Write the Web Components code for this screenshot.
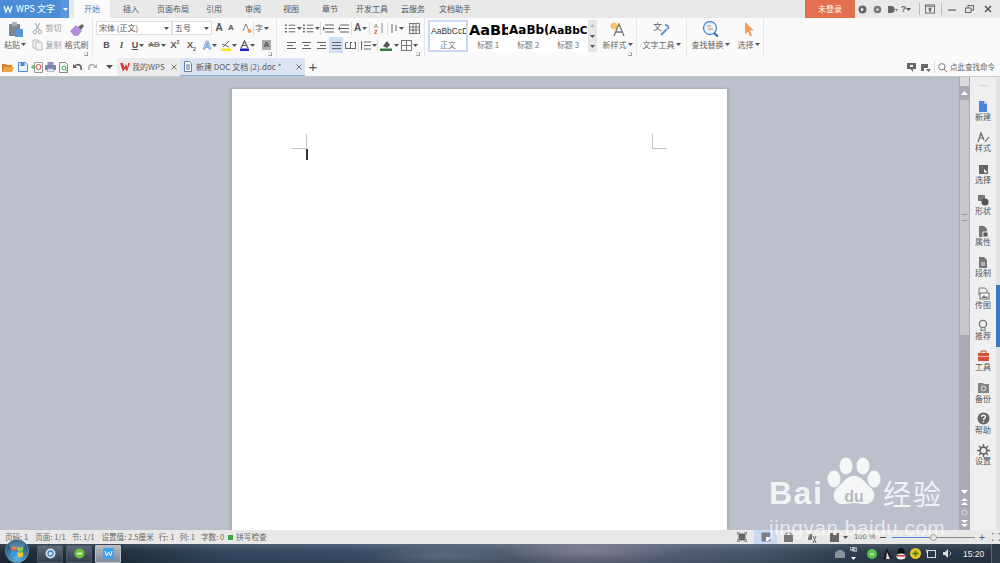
<!DOCTYPE html>
<html>
<head>
<meta charset="utf-8">
<style>
  html, body { margin: 0; padding: 0; width: 1000px; height: 563px; overflow: hidden; }
  body { font-family: "Noto Sans CJK SC", "Liberation Sans", sans-serif; }
  wps-side-item svg { display: block; }
</style>
</head>
<body>
<wps-app>
  <wps-titlebar></wps-titlebar>
  <wps-ribbon></wps-ribbon>
  <wps-quickbar></wps-quickbar>
  <wps-workspace>
    <wps-document></wps-document>
    <wps-scrollbar></wps-scrollbar>
    <wps-sidebar>
      <wps-side-item label="新建"><svg width="12" height="13" viewBox="0 0 12 13"><path d="M2 1h5l3 3v8H2z" fill="#4a86d8"/><path d="M7 1l3 3H7z" fill="#a9c8ef"/></svg></wps-side-item>
      <wps-side-item label="样式"><svg width="13" height="13" viewBox="0 0 13 13"><path d="M1 11L4 2l3 7M3 7h3M8 11l4-5" fill="none" stroke="#666" stroke-width="1.2"/></svg></wps-side-item>
      <wps-side-item label="选择"><svg width="12" height="12" viewBox="0 0 12 12"><rect x="2" y="2" width="9" height="9" fill="#666"/><path d="M7 6l3 3-1 1-2-1z" fill="#fff"/></svg></wps-side-item>
      <wps-side-item label="形状"><svg width="13" height="12" viewBox="0 0 13 12"><rect x="1" y="1" width="7" height="6" fill="#777"/><circle cx="8" cy="8" r="3.6" fill="#555"/></svg></wps-side-item>
      <wps-side-item label="属性"><svg width="12" height="13" viewBox="0 0 12 13"><path d="M2 1h5l3 3v8H2z" fill="#777"/><rect x="6" y="7" width="5" height="5" fill="#555" stroke="#eee"/></svg></wps-side-item>
      <wps-side-item label="段制"><svg width="12" height="13" viewBox="0 0 12 13"><path d="M2 1h5l3 3v8H2z" fill="#777"/><path d="M4 7h4M4 9h4" stroke="#eee"/></svg></wps-side-item>
      <wps-side-item label="传图"><svg width="13" height="13" viewBox="0 0 13 13"><path d="M2 8V1h6l2 2v2" fill="none" stroke="#777"/><rect x="3" y="6" width="9" height="6" fill="#fff" stroke="#666"/><path d="M4 11l3-3 2 2 1-1 1 2z" fill="#777"/></svg></wps-side-item>
      <wps-side-item label="推荐"><svg width="12" height="13" viewBox="0 0 12 13"><circle cx="6" cy="5" r="3.6" fill="none" stroke="#777" stroke-width="1.4"/><path d="M4 8.500V12l2-1 2 1V8.500" fill="none" stroke="#777"/></svg></wps-side-item>
      <wps-side-item label="工具"><svg width="13" height="12" viewBox="0 0 13 12"><path d="M4 3V1h5v2" fill="none" stroke="#c9492f"/><rect x="1" y="3" width="11" height="8" fill="#d0533a"/><rect x="1" y="6" width="11" height="1" fill="#f2b6a6"/></svg></wps-side-item>
      <wps-side-item label="备份"><svg width="13" height="12" viewBox="0 0 13 12"><path d="M1 1h5l1 1h5v9H1z" fill="#858585"/><circle cx="6.500" cy="6.500" r="2.200" fill="none" stroke="#eee"/></svg></wps-side-item>
      <wps-side-item label="帮助"><svg width="13" height="13" viewBox="0 0 13 13"><circle cx="6.500" cy="6.500" r="6" fill="#666"/><path d="M4.600 5c0-2.400 3.900-2.400 3.900 0 0 1.400-2 1.400-2 3" fill="none" stroke="#fff" stroke-width="1.300"/><rect x="5.800" y="9" width="1.400" height="1.400" fill="#fff"/></svg></wps-side-item>
      <wps-side-item label="设置"><svg width="13" height="13" viewBox="0 0 13 13"><circle cx="6.500" cy="6.500" r="3.400" fill="none" stroke="#666" stroke-width="1.600"/><path d="M6.500 0v3M6.500 10v3M0 6.500h3M10 6.500h3M2 2l2 2M9 9l2 2M11 2L9 4M4 9l-2 2" stroke="#666" stroke-width="1.400"/></svg></wps-side-item>
    </wps-sidebar>
  </wps-workspace>
  <wps-statusbar></wps-statusbar>
  <wps-taskbar></wps-taskbar>
  <wps-watermark></wps-watermark>
</wps-app>
<script>
const FONT = '"Noto Sans CJK SC", "Liberation Sans", sans-serif';
const caret = '<svg class="car" width="5" height="3" viewBox="0 0 5 3"><path d="M0 0h5L2.500 3z" fill="#555"/></svg>';

function svg(w, h, body) {
    return `<svg width="${w}" height="${h}" viewBox="0 0 ${w} ${h}">${body}</svg>`;
}
function cell(w, inner, cls) {
    return `<span class="cell ${cls || ''}" style="width:${w}px">${inner}</span>`;
}
function lines(xs, ys, c) {
    return ys.map((y, i) => `<path d="M${xs[i][0]} ${y}H${xs[i][1]}" stroke="${c || '#666'}"/>`).join('');
}

class WpsApp extends HTMLElement {
    constructor() {
        super();
        this.attachShadow({mode: 'open'});
    }
    connectedCallback() {
        this.shadowRoot.innerHTML = `
            <style>
                :host { display: flex; flex-direction: column; position: relative; width: 1000px; height: 563px; overflow: hidden; font-family: ${FONT}; }
            </style>
            <slot></slot>`;
    }
}

class WpsTitlebar extends HTMLElement {
    constructor() {
        super();
        this.attachShadow({mode: 'open'});
    }
    connectedCallback() {
        const tabs = [['插入', 13], ['页面布局', 18], ['引用', 17], ['审阅', 23], ['视图', 22], ['章节', 23], ['开发工具', 18], ['云服务', 13], ['文档助手', 14]];
        this.shadowRoot.innerHTML = `
            <style>
                :host { display: flex; height: 18px; background: #e9e9e9; color: #555; font-size: 8px; line-height: 18px; }
                .brand { width: 69px; display: flex; align-items: center; background: #4a8cd6; color: #fff; font-size: 9px; box-sizing: border-box; padding-left: 3px; }
                .brand b { font-weight: 400; margin-left: 3px; white-space: nowrap; }
                .brand i { margin-left: auto; width: 8px; height: 18px; background: #5a97dc; display: flex; align-items: center; justify-content: center; }
                .tabs { display: flex; margin-left: 5px; flex: 1; white-space: nowrap; }
                .on { width: 36px; background: #fafafa; color: #3f7fce; text-align: center; }
                .login { width: 50px; background: #e2704f; color: #fff; text-align: center; }
                .win { display: flex; align-items: center; width: 145px; }
                .win svg { display: block; }
                .cell { display: flex; justify-content: center; align-items: center; height: 18px; flex: none; }
            </style>
            <div class="brand">
                ${svg(10, 10, '<path d="M1 2l2 6 2-5 2 5 2-6" fill="none" stroke="#fff" stroke-width="1.200"/>')}
                <b>WPS 文字</b>
                <i>${caret.replace('#555', '#fff')}</i>
            </div>
            <div class="tabs">
                <span class="on">开始</span>
                ${tabs.map(t => `<span style="margin-left:${t[1]}px">${t[0]}</span>`).join('')}
            </div>
            <div class="login">未登录</div>
            <div class="win">
                ${cell(15, svg(9, 9, '<circle cx="4.500" cy="4.500" r="4" fill="#666"/><path d="M3 2.500l3 2-3 2z" fill="#eee"/>'))}
                ${cell(15, svg(9, 9, '<circle cx="4.500" cy="4.500" r="3.800" fill="#777"/><circle cx="4.500" cy="4.500" r="1.300" fill="#ddd"/>'))}
                ${cell(14, svg(11, 9, '<path d="M1 1h3c5 0 5 7 0 7H1z" fill="#666"/><path d="M8 4h3L9.500 6z" fill="#666"/>'))}
                ${cell(14, `<span style="font:700 9px 'Liberation Sans';color:#666">?</span>` + caret)}
                ${cell(12, svg(1, 12, '<path d="M.5 0v12" stroke="#bbb"/>'))}
                ${cell(10, svg(11, 10, '<rect x=".5" y=".5" width="10" height="9" fill="none" stroke="#666"/><path d="M1 2h9" stroke="#666"/><path d="M5.500 3l2.500 2.500H6.500V8h-2V5.500H3z" fill="#666"/>'))}
                ${cell(12, svg(1, 12, '<path d="M.5 0v12" stroke="#bbb"/>'))}
                ${cell(10, svg(8, 3, '<path d="M0 2h8" stroke="#666" stroke-width="1.300"/>'))}
                ${cell(24, svg(9, 8, '<rect x="3" y=".5" width="5.500" height="4.500" fill="none" stroke="#666"/><rect x=".5" y="3" width="5.500" height="4.500" fill="#e9e9e9" stroke="#666"/>'))}
                ${cell(14, svg(8, 8, '<path d="M1 1l6 6M7 1L1 7" stroke="#555" stroke-width="1.500"/>'))}
            </div>`;
    }
}

class WpsRibbon extends HTMLElement {
    constructor() {
        super();
        this.attachShadow({mode: 'open'});
    }
    connectedCallback() {
        const launcher = '<i class="launch"></i>';
        const sep = '<i class="vsep"></i>';
        const row = '<path d="M3 2h9M3 5.500h9M3 9h9" stroke="#666"/>';
        const bullets = '<path d="M1 2h2M1 5.500h2M1 9h2" stroke="#666" stroke-width="1.500"/><path d="M5 2h7M5 5.500h7M5 9h7" stroke="#666"/>';
        this.shadowRoot.innerHTML = `
            <style>
                :host { display: flex; height: 40px; background: #fafafa; color: #666; font-size: 8px; line-height: 10px; overflow: hidden; }
                .group { position: relative; display: flex; flex: none; box-sizing: border-box; height: 39px; border-right: 1px solid #e7e7e7; }
                .launch { position: absolute; right: 4px; bottom: 1px; width: 2px; height: 2px; border: 1px solid #9a9a9a; border-left-color: #ddd; border-top-color: #ddd; }
                .col { display: flex; flex-direction: column; align-items: center; flex: none; }
                .cell { display: inline-flex; align-items: center; justify-content: center; flex: none; height: 16px; gap: 1px; font-size: 8px; white-space: nowrap; }
                .rows { display: flex; flex-direction: column; gap: 1px; padding-top: 2px; }
                .row { display: flex; height: 16px; align-items: center; }
                .combo { justify-content: flex-start; box-sizing: border-box; height: 14px; padding: 0 2px; background: #fff; border: 1px solid #e0e0e0; position: relative; color: #555; }
                .combo .car { position: absolute; right: 2px; top: 5px; }
                .vsep { width: 1px; height: 13px; background: #ddd; flex: none; }
                .sel { background: #cfdff3; }
                .lab { margin-top: 2px; }
                .faint { color: #999; }
                .f { font-family: "Liberation Sans", sans-serif; font-weight: 700; color: #555; font-size: 9px; }
                .styles { display: flex; width: 169px; height: 32px; margin: 2px 0 0 3px; background: #eeeeee; }
                .st { display: flex; flex-direction: column; align-items: center; height: 32px; width: 40px; background: #fff; overflow: hidden; white-space: nowrap; box-sizing: border-box; color: #777; }
                .st b { display: flex; align-items: center; align-self: flex-start; padding-left: 1px; height: 20px; font-family: "DejaVu Sans", "Liberation Sans", sans-serif; color: #000; }
                .st.cur { border: 2px solid #c9daf2; width: 40px; }
                .sc { display: flex; flex-direction: column; margin-left: auto; width: 9px; background: #e6e6e6; }
                .sc i { flex: 1; display: flex; align-items: center; justify-content: center; }
                .big { padding-top: 3px; }
                .big svg { display: block; }
            </style>
            <div class="group" style="width:93px">
                <div class="col" style="width:30px;padding-top:3px">
                    ${svg(17, 17, '<rect x="2" y="3" width="11" height="12" rx="1" fill="#7c8794"/><rect x="5" y="1" width="5" height="4" fill="#a4acb6"/><path d="M8 8h8v8H8z" fill="#5b93dc"/>')}
                    <span class="cell" style="height:13px">粘贴 ${caret}</span>
                </div>
                <div class="col" style="width:33px;padding-top:2px;gap:1px">
                    <span class="cell faint">${svg(11, 12, '<circle cx="3" cy="10" r="1.800" fill="none" stroke="#aaa"/><circle cx="8" cy="10" r="1.800" fill="none" stroke="#aaa"/><path d="M3.500 8L8 1M7.500 8L3 1" stroke="#aaa" stroke-width="1.200"/>')}&nbsp;剪切</span>
                    <span class="cell faint">${svg(11, 12, '<path d="M1 1h5l1 1v7H1z" fill="#f3f3f3" stroke="#bbb"/><path d="M4 3h5l1 1v7H4z" fill="#f3f3f3" stroke="#bbb"/>')}&nbsp;复制</span>
                </div>
                <div class="col" style="width:27px;padding-top:5px">
                    ${svg(16, 14, '<path d="M1 8l6-6 6 6-4 5H5z" fill="#b48ce0"/><path d="M9 4l4-3 2 2-3 4z" fill="#666"/>')}
                    <span class="cell" style="height:13px;margin-top:1px">格式刷</span>
                </div>
                ${launcher}
            </div>
            <div class="group" style="width:184px;padding-left:3px">
                <div class="rows">
                    <div class="row">
                        ${cell(76, '宋体 (正文)' + caret, 'combo')}
                        ${cell(40, '五号' + caret, 'combo')}
                        ${cell(1, '')}
                        ${cell(12, `<span class="f" style="font-size:10px">A</span>`)}
                        ${cell(12, `<span class="f" style="font-size:8px">A</span>`)}
                        ${cell(4, '')}
                        ${cell(12, svg(10, 11, '<path d="M1 8l3-7 3 7" fill="none" stroke="#888"/><circle cx="7.500" cy="8" r="2" fill="#e8a04c"/>'))}
                        ${sep}
                        ${cell(16, `<span style="color:#666">字</span>${caret}`)}
                    </div>
                    <div class="row">
                        ${cell(3, '')}
                        ${cell(15, '<span class="f">B</span>')}
                        ${cell(15, '<span class="f" style="font-family:Liberation Serif;font-style:italic">I</span>')}
                        ${cell(18, `<span class="f" style="text-decoration:underline">U</span>${caret}`)}
                        ${cell(20, `<span class="f" style="text-decoration:line-through;font-size:8px;color:#777">AB</span>${caret}`)}
                        ${cell(16, `<span class="f">X<sup style="font-size:5px;line-height:0">2</sup></span>`)}
                        ${cell(17, `<span class="f">X<sub style="font-size:5px;line-height:0">2</sub></span>`)}
                        ${cell(20, `<span class="f" style="color:#fff;-webkit-text-stroke:.7px #4a7fcf;font-size:11px">A</span>${caret}`)}
                        ${cell(18, svg(10, 11, '<path d="M2 7l6-6M1 4l7 3" stroke="#666"/><rect y="8.500" width="10" height="2.500" fill="#f5e51b"/>') + caret)}
                        ${cell(18, svg(9, 11, '<path d="M1 8l3.500-7L8 8M2.500 5.500h4" fill="none" stroke="#555" stroke-width="1.200"/><rect y="8.500" width="9" height="2.500" fill="#2020c8"/>') + caret)}
                        ${cell(21, `<span class="f" style="background:#aaa;padding:0 2px;line-height:10px;font-size:8px">A</span>`)}
                    </div>
                </div>
                ${launcher}
            </div>
            <div class="group" style="width:148px;padding-left:7px">
                <div class="rows">
                    <div class="row">
                        ${cell(18, svg(13, 11, bullets) + caret)}
                        ${cell(18, svg(13, 11, bullets) + caret)}
                        ${sep}
                        ${cell(15, svg(13, 11, row + '<path d="M1 3l2 2.500L1 8" fill="#666"/>'))}
                        ${cell(15, svg(13, 11, row + '<path d="M3 3L1 5.500 3 8" fill="#666"/>'))}
                        ${sep}
                        ${cell(17, `<span class="f" style="font-size:10px">A</span>${caret}`)}
                        ${sep}
                        ${cell(17, svg(10, 12, '<text x="0" y="5.500" font-size="6" font-family="Liberation Sans" fill="#666">A</text><text x="0" y="11.500" font-size="6" font-family="Liberation Sans" font-weight="700" fill="#d9483b">Z</text><path d="M8 1v10" stroke="#888"/>'))}
                        ${sep}
                        ${cell(18, svg(8, 11, '<path d="M2 1v9M6 2v6" stroke="#666"/>') + caret)}
                        ${cell(16, svg(11, 11, '<rect x=".5" y=".5" width="10" height="10" fill="none" stroke="#777"/><path d="M4 0v11M7 0v11M0 4h11M0 7h11" stroke="#777"/>'))}
                    </div>
                    <div class="row">
                        ${cell(15, svg(13, 11, lines([[2, 11], [2, 8], [2, 11]], [2.5, 5.5, 8.5])))}
                        ${cell(15, svg(13, 11, lines([[2, 11], [4, 9], [2, 11]], [2.5, 5.5, 8.5])))}
                        ${cell(15, svg(13, 11, lines([[2, 11], [5, 11], [2, 11]], [2.5, 5.5, 8.5])))}
                        ${cell(14, svg(13, 11, lines([[2, 11], [2, 11], [2, 11]], [2.5, 5.5, 8.5])), 'sel')}
                        ${cell(15, svg(13, 11, lines([[2, 4], [6, 8], [10, 12]], [2.5, 2.5, 2.5]) + lines([[1, 12]], [8.5]) + '<path d="M1.500 3v5M6.500 3v5M11.500 3v5" stroke="#666"/>'))}
                        ${sep}
                        ${cell(18, svg(11, 11, row.replace('M3 2h9M3 5.500h9M3 9h9', 'M4 2h7M4 5.500h7M4 9h7') + '<path d="M1.500 1v9" stroke="#666"/>') + caret)}
                        ${sep}
                        ${cell(22, svg(13, 12, '<path d="M3 7l4-5 3 4-3 3z" fill="#555"/><rect y="9.500" width="12" height="2.500" fill="#3a7a3f"/>') + caret)}
                        ${cell(18, svg(11, 11, '<rect x=".5" y=".5" width="10" height="10" fill="none" stroke="#777"/><path d="M5.500 0v11M0 5.500h11" stroke="#777"/>') + caret)}
                    </div>
                </div>
                ${launcher}
            </div>
            <div class="styles">
                <div class="st cur" style="width:40px"><b style="font-family:'Liberation Sans';font-weight:400;font-size:8.500px;height:18px;color:#333">AaBbCcDd</b><span>正文</span></div>
                <div class="st"><b style="font-size:14.500px;height:20px">AaBb</b><span>标题 1</span></div>
                <div class="st"><b style="font-size:12px">AaBb(</b><span>标题 2</span></div>
                <div class="st"><b style="font-size:10.500px">AaBbC</b><span>标题 3</span></div>
                <div class="sc"><i>${svg(5, 3, '<path d="M0 3h5L2.500 0z" fill="#bbb"/>')}</i><i>${caret}</i><i>${caret}</i></div>
            </div>
            <div class="group" style="width:38px;margin-left:2px;justify-content:center">
                <div class="col big">
                    ${svg(17, 16, '<circle cx="5" cy="5" r="3.500" fill="#f1c766"/><path d="M5 15l5-12 5 12M7 11h6" fill="none" stroke="#777" stroke-width="1.300"/>')}
                    <span class="cell" style="height:13px;margin-top:1px">新样式 ${caret}</span>
                </div>
                ${launcher}
            </div>
            <div class="group" style="width:50px;justify-content:center">
                <div class="col big">
                    ${svg(18, 16, '<text x="0" y="9" font-size="9" fill="#666" font-family="Noto Sans CJK SC">文</text><path d="M8 14l6-6M12 4c3 0 4 2 3 4" stroke="#5f8fd0" stroke-width="1.800" fill="none"/>')}
                    <span class="cell" style="height:13px;margin-top:1px">文字工具 ${caret}</span>
                </div>
            </div>
            <div class="group" style="width:47px;justify-content:center;border-right:0">
                <div class="col big">
                    ${svg(18, 16, '<circle cx="8" cy="7" r="6.500" fill="#eef4fb" stroke="#4d8ad6" stroke-width="1.300"/><path d="M12 12l4 3.500" stroke="#2a66b8" stroke-width="2"/><path d="M5 5h4M6 8h5" stroke="#b48a4a"/>')}
                    <span class="cell" style="height:13px;margin-top:1px">查找替换 ${caret}</span>
                </div>
            </div>
            <div class="group" style="width:30px;justify-content:center">
                <div class="col big">
                    ${svg(14, 16, '<path d="M3 1l9 8.500H8l2 5-2 1-2-5-3 3z" fill="#ef9f5c"/>')}
                    <span class="cell" style="height:13px;margin-top:1px">选择 ${caret}</span>
                </div>
            </div>`;
    }
}

class WpsQuickbar extends HTMLElement {
    constructor() {
        super();
        this.attachShadow({mode: 'open'});
    }
    connectedCallback() {
        this.shadowRoot.innerHTML = `
            <style>
                :host { display: flex; align-items: stretch; height: 18px; background: #fafafa; color: #666; font-size: 8px; line-height: 18px; white-space: nowrap; }
                .icons { display: flex; align-items: center; width: 113px; padding-left: 1px; box-sizing: border-box; flex: none; }
                .cell { display: flex; justify-content: center; align-items: center; height: 18px; flex: none; }
                .tab { display: flex; align-items: center; box-sizing: border-box; height: 18px; flex: none; }
                .t1 { width: 63px; margin-left: 4px; background: #ececec; padding-left: 3px; }
                .t2 { width: 125px; background: #dbe5f1; border-bottom: 1px solid #8aaed8; padding-left: 3px; color: #555; }
                .x { margin-left: auto; margin-right: 3px; }
                .plus { width: 16px; text-align: center; font: 400 15px/18px "Liberation Sans", sans-serif; color: #555; }
                .right { margin-left: auto; display: flex; align-items: center; padding-right: 5px; }
                svg { display: block; }
            </style>
            <div class="icons">
                ${cell(14, svg(12, 10, '<path d="M0 2h4l1 1h5v2H3L1 10H0z" fill="#d9822b"/><path d="M3 5h9l-2 5H1z" fill="#f0a33e"/>'))}
                ${cell(15, svg(10, 10, '<path d="M.5.500h7l2 2v7h-9z" fill="#e8f0fb" stroke="#4d8ad6"/><rect x="2.500" y="1" width="4" height="3" fill="#4d8ad6"/>'))}
                ${cell(14, svg(12, 11, '<path d="M3.500.500h8v10h-8z" fill="#fff" stroke="#999"/><circle cx="7.500" cy="5" r="2.500" fill="none" stroke="#d6473b"/><path d="M0 5h4M2 3v4" stroke="#3fa34d"/>'))}
                ${cell(13, svg(11, 10, '<rect x="2.500" y="0" width="6" height="3" fill="#8a94b8"/><rect y="3" width="11" height="5" fill="#7a85ad"/><rect x="2.500" y="6.500" width="6" height="3.500" fill="#dfe3ef" stroke="#7a85ad" stroke-width=".6"/>'))}
                ${cell(13, svg(10, 11, '<path d="M.5.500h6l2 2v8h-8z" fill="#fff" stroke="#888"/><circle cx="5" cy="6" r="2" fill="none" stroke="#3fa34d"/><path d="M6.500 7.500l2 2" stroke="#3fa34d"/>'))}
                ${cell(15, svg(9, 8, '<path d="M2 3c3-3 7-1 6 4" fill="none" stroke="#555" stroke-width="1.500"/><path d="M0 1l4 4H0z" fill="#555"/>'))}
                ${cell(14, svg(9, 8, '<path d="M7 3C4 0 0 2 1 7" fill="none" stroke="#aaa" stroke-width="1.500"/><path d="M9 1L5 5h4z" fill="#aaa"/>'))}
                <span style="width:1px;height:13px;background:#d8d8d8;margin-left:3px"></span>
                ${cell(15, svg(7, 4, '<path d="M0 0h7L3.500 4z" fill="#555"/>'))}
            </div>
            <div class="tab t1">
                <svg width="10" height="8" viewBox="0 0 11 9"><path d="M0 0h3l2 5 1-3h1l1 3 1-5h2L8 9H7L5.500 6 4 9H3z" fill="#d8392b"/></svg>
                <span style="margin-left:2px">我的WPS</span>
                <span class="x">${svg(6, 6, '<path d="M.500.500l5 5M5.500.500l-5 5" stroke="#777"/>')}</span>
            </div>
            <div class="tab t2">
                ${svg(10, 11, '<path d="M1.500.500h5l2 2v8h-7z" fill="#fff" stroke="#6a7f9d"/><path d="M3 4h4M3 6h4M3 8h4" stroke="#4d77ad"/>')}
                <span style="margin-left:3px">新建 DOC 文档 (2).doc *</span>
                <span class="x">${svg(6, 6, '<path d="M.500.500l5 5M5.500.500l-5 5" stroke="#777"/>')}</span>
            </div>
            <span class="plus">+</span>
            <div class="right">
                ${svg(9, 9, '<path d="M0 0h9v6H6v3L3.500 6H0z" fill="#666"/><rect x="3" y="2" width="3" height="2" fill="#fafafa"/>')}
                <span style="width:5px"></span>
                ${svg(10, 9, '<path d="M0 1h7v4H3v3H0z" fill="#666"/><path d="M5 6h5L7.500 9z" fill="#666"/>')}
                <span style="width:1px;height:12px;background:#d8d8d8;margin:0 3px 0 3px"></span>
                ${svg(9, 9, '<circle cx="3.800" cy="3.800" r="3.200" fill="none" stroke="#777"/><path d="M6 6l3 3" stroke="#777"/>')}
                <span style="margin-left:3px;font-size:7.500px">点此查找命令</span>
            </div>`;
    }
}

class WpsWorkspace extends HTMLElement {
    constructor() {
        super();
        this.attachShadow({mode: 'open'});
    }
    connectedCallback() {
        this.shadowRoot.innerHTML = `
            <style>
                :host { display: flex; flex: none; height: 453px; border-top: 1px solid #c6c8d0; background: #bcc0cb; overflow: hidden; }
            </style>
            <slot></slot>`;
    }
}

class WpsDocument extends HTMLElement {
    constructor() {
        super();
        this.attachShadow({mode: 'open'});
    }
    connectedCallback() {
        this.shadowRoot.innerHTML = `
            <style>
                :host { display: flex; justify-content: center; width: 959px; flex: none; box-sizing: border-box; padding-top: 12px; }
                .page { position: relative; width: 495px; height: 480px; background: #fff; box-shadow: -2px -1px 2px #a9acb7, 2px 0 2px #a9acb7; }
                .page i { position: absolute; background: #c4c4c4; }
                .page .cursor { left: 74px; top: 60px; width: 1.500px; height: 11px; background: #333; }
            </style>
            <div class="page">
                <i style="left:74px;top:45px;width:1px;height:15px"></i>
                <i style="left:60px;top:59px;width:15px;height:1px"></i>
                <i style="left:420px;top:45px;width:1px;height:15px"></i>
                <i style="left:420px;top:59px;width:15px;height:1px"></i>
                <i class="cursor"></i>
            </div>`;
    }
}

class WpsScrollbar extends HTMLElement {
    constructor() {
        super();
        this.attachShadow({mode: 'open'});
    }
    connectedCallback() {
        const tri = (d) => svg(7, 4, `<path d="${d}" fill="#fff"/>`);
        this.shadowRoot.innerHTML = `
            <style>
                :host { display: flex; flex-direction: column; align-items: center; width: 11px; flex: none; background: #a9aab6; box-sizing: border-box; }
                .top { width: 9px; height: 9px; background: #d9d9de; }
                .arrow { height: 14px; display: flex; align-items: center; justify-content: center; }
                .thumb { width: 9px; height: 235px; background: #c6c8cd; display: flex; align-items: center; justify-content: center; }
                .grip { width: 5px; height: 5px; border-top: 1px solid #999; border-bottom: 1px solid #999; position: relative; }
                .spacer { flex: 1; }
                .nav { display: flex; flex-direction: column; align-items: center; gap: 4px; padding-bottom: 3px; }
                .nav svg { display: block; }
            </style>
            <div class="top"></div>
            <div class="arrow">${tri('M0 4h7L3.500 0z')}</div>
            <div class="thumb"><div class="grip"></div></div>
            <div class="spacer"></div>
            <div class="nav">
                ${tri('M0 0h7L3.500 4z')}
                ${svg(7, 7, '<path d="M0 3h7L3.500 0zM0 7h7L3.500 4z" fill="#fff"/>')}
                ${svg(7, 7, '<circle cx="3.500" cy="3.500" r="2.500" fill="none" stroke="#ddd"/>')}
                ${svg(7, 7, '<path d="M0 0h7L3.500 3zM0 4h7L3.500 7z" fill="#fff"/>')}
            </div>`;
    }
}

class WpsSidebar extends HTMLElement {
    constructor() {
        super();
        this.attachShadow({mode: 'open'});
    }
    connectedCallback() {
        this.shadowRoot.innerHTML = `
            <style>
                :host { display: flex; flex: 1; background: #e3e3e3; position: relative; }
                .list { width: 26px; background: #eeeff1; display: flex; flex-direction: column; box-sizing: border-box; padding-top: 8px; }
                .handle { width: 9px; height: 1px; background: #d5d5d8; margin: 0 auto 13px; flex: none; }
                .blue { position: absolute; right: 0; top: 208px; width: 4px; height: 62px; background: #3d78c4; }
            </style>
            <div class="list"><div class="handle"></div><slot></slot></div>
            <div class="blue"></div>`;
    }
}

class WpsSideItem extends HTMLElement {
    constructor() {
        super();
        this.attachShadow({mode: 'open'});
    }
    connectedCallback() {
        this.shadowRoot.innerHTML = `
            <style>
                :host { display: flex; flex-direction: column; align-items: center; height: 31.300px; flex: none; color: #555; font-size: 8px; line-height: 10px; }
                .icon { height: 14px; display: flex; align-items: center; }
                .label { margin-top: -1px; }
            </style>
            <div class="icon"><slot></slot></div>
            <div class="label">${this.getAttribute('label')}</div>`;
    }
}

class WpsStatusbar extends HTMLElement {
    constructor() {
        super();
        this.attachShadow({mode: 'open'});
    }
    connectedCallback() {
        const items = [['页码: 1', 5], ['页面: 1/1', 7], ['节: 1/1', 6], ['设置值: 2.5厘米', 7], ['行: 1', 5], ['列: 1', 5], ['字数: 0', 6]];
        this.shadowRoot.innerHTML = `
            <style>
                :host { display: flex; align-items: center; flex: none; height: 14px; background: #e8e8e8; color: #666; font-size: 7.600px; line-height: 14px; white-space: nowrap; }
                .cell { display: flex; justify-content: center; align-items: center; height: 14px; flex: none; }
                .right { margin-left: auto; display: flex; align-items: center; width: 265px; flex: none; }
                .sel { background: #c9dbf3; }
                svg { display: block; }
                .track { width: 83px; height: 1px; background: #888; position: relative; margin-left: 6px; flex: none; }
                .track i { position: absolute; left: 0; top: 0; width: 41px; height: 1px; background: #4a8cd6; }
                .track b { position: absolute; left: 38px; top: -3px; width: 7px; height: 7px; border-radius: 50%; background: #e8e8e8; border: 1px solid #999; box-sizing: border-box; }
            </style>
            ${items.map((t, i) => `<span style="margin-left:${t[1]}px">${t[0]}</span>`).join('')}
            <span style="width:5px;height:5px;background:#3fa34d;margin:0 3px 0 4px"></span>
            <span>拼写检查</span>
            <div class="right">
                ${cell(14, svg(10, 10, '<rect x="1.500" y="1.500" width="7" height="7" fill="#666"/><path d="M0 0h3M7 0h3M0 10h3M7 10h3M0 0v3M10 0v3M0 7v3M10 7v3" stroke="#555"/>'))}
                <span style="width:5px;flex:none"></span>
                ${cell(23, svg(10, 10, '<rect x=".5" y=".5" width="9" height="9" fill="#7a7f88"/><path d="M5 5h4v2L7 9H5z" fill="#fff"/>'), 'sel')}
                ${cell(22, svg(9, 10, '<rect x="0" y="3" width="9" height="7" fill="#777"/><path d="M2 3V1h5v2" fill="none" stroke="#777"/>'))}
                ${cell(26, svg(9, 11, '<path d="M0 2h4v6H0z" fill="#777"/><path d="M5 4l3 7M8 4l-3 7" stroke="#666"/>'))}
                ${cell(18, svg(9, 10, '<path d="M0 1h3v2h3V1h3v9H0z" fill="#666"/>'))}
                ${cell(5, caret)}
                <span style="margin-left:6px;width:22px;flex:none;font-family:Liberation Sans">100 %</span>
                <span style="margin-left:4px;width:6px;height:1px;background:#555;flex:none"></span>
                <span class="track"><i></i><b></b></span>
                <span style="font:400 11px 'Liberation Sans';width:14px;text-align:center;flex:none">+</span>
                ${cell(13, svg(8, 8, '<path d="M0 2V0h2M6 0h2v2M8 6v2H6M2 8H0V6" fill="none" stroke="#777"/>'))}
            </div>`;
    }
}

class WpsTaskbar extends HTMLElement {
    constructor() {
        super();
        this.attachShadow({mode: 'open'});
    }
    connectedCallback() {
        this.shadowRoot.innerHTML = `
            <style>
                :host { display: flex; align-items: center; flex: none; height: 19px; position: relative; color: #f2f2f2; font: 8.500px "Liberation Sans", sans-serif;
                    background:
                        linear-gradient(rgba(255,255,255,.12), rgba(255,255,255,0) 40%, rgba(0,0,0,.12)),
                        radial-gradient(ellipse 90px 12px at 590px 8px, rgba(150,140,165,.55), rgba(150,140,165,0)),
                        radial-gradient(ellipse 70px 10px at 440px 12px, rgba(130,140,160,.4), rgba(130,140,160,0)),
                        linear-gradient(90deg, #1e2b39 0%, #22303f 12%, #33475f 22%, #3a4d66 35%, #4a5a70 46%, #5f6579 58%, #56607a 66%, #47566c 76%, #2f3e50 85%, #283442 100%); }
                .orb { width: 24px; height: 24px; margin: -5px 0 0 5px; flex: none; position: relative; }
                .btn { display: flex; align-items: center; justify-content: center; box-sizing: border-box; height: 18px; width: 26px; margin-left: 3px; border: 1px solid #4b5763; border-radius: 1px; background: linear-gradient(#5e6a77, #333f4c); flex: none; }
                .btn.on { background: linear-gradient(#b4bbc4, #7f8a96); border-color: #b9c0c8; }
                .tray { margin-left: auto; display: flex; align-items: center; height: 19px; width: 167px; flex: none; }
                .cell { display: flex; justify-content: center; align-items: center; height: 19px; flex: none; }
                svg { display: block; }
            </style>
            <div class="orb">
                <svg width="24" height="24" viewBox="0 0 24 24">
                    <defs>
                        <radialGradient id="g" cx=".5" cy=".8" r=".7"><stop offset="0" stop-color="#5fb6e8"/><stop offset="1" stop-color="#1b4f78"/></radialGradient>
                    </defs>
                    <circle cx="12" cy="12" r="11.500" fill="url(#g)" stroke="#9db2c4" stroke-width=".6"/>
                    <path d="M6 8c2-1 4-1 5.500 0v4c-2-1-4-1-5.500 0z" fill="#f0592b"/>
                    <path d="M12.500 8c2 1 4 1 5.500 0v4c-2 1-4 1-5.500 0z" fill="#8cc63f"/>
                    <path d="M6 13c2-1 4-1 5.500 0v4.500c-2-1-4-1-5.500 0z" fill="#2f9fe8"/>
                    <path d="M12.500 13c2 1 4 1 5.500 0v4.500c-2 1-4 1-5.500 0z" fill="#fbc52c"/>
                    <ellipse cx="12" cy="6" rx="8" ry="4.500" fill="rgba(255,255,255,.2)"/>
                </svg>
            </div>
            <div class="btn" style="margin-left:8px">${svg(11, 11, '<circle cx="5.500" cy="5.500" r="5" fill="#cfe0f2"/><circle cx="5.500" cy="5.500" r="2.500" fill="none" stroke="#4b82bd" stroke-width="1.300"/>')}</div>
            <div class="btn">${svg(11, 11, '<circle cx="5.500" cy="5.500" r="5" fill="#6cc03e"/><path d="M3 5.500h5" stroke="#fff" stroke-width="1.500"/>')}</div>
            <div class="btn on">${svg(11, 11, '<rect width="11" height="11" rx="1.500" fill="#3fa0ee"/><path d="M2 3l1.500 5L5.500 4l2 4L9 3" fill="none" stroke="#fff"/>')}</div>
            <div class="tray">
                ${cell(13, svg(10, 8, '<path d="M0 3l3-3h4l3 3v5H0z" fill="#8a929c"/>'))}
                ${cell(15, svg(7, 13, '<rect x="0" y="0" width="4" height="3" fill="none" stroke="#ddd"/><rect x="3" y="1" width="4" height="3" fill="none" stroke="#ddd"/><path d="M1 10h5L3.500 13z" fill="#fff"/>'))}
                <span style="width:3px;flex:none"></span>
                ${cell(16, svg(10, 10, '<circle cx="5" cy="5" r="5" fill="#5cc04f"/><path d="M3 5h4" stroke="#fff"/>'))}
                ${cell(14, svg(11, 11, '<path d="M1 11L5 0l5 11z" fill="#1a1a1a"/><path d="M5 4l3 7H4z" fill="#ddd"/>'))}
                ${cell(14, svg(10, 12, '<ellipse cx="5" cy="4" rx="3.500" ry="4" fill="#111"/><ellipse cx="5" cy="8.500" rx="4.500" ry="3" fill="#eee"/><path d="M1 7h8v1.500H1z" fill="#d9312b"/>'))}
                ${cell(15, svg(11, 11, '<circle cx="5.500" cy="5.500" r="5.500" fill="#e6c423"/><path d="M2.500 5.500h6M5.500 2.500v6" stroke="#2c7f31" stroke-width="1.500"/>'))}
                ${cell(16, svg(10, 9, '<rect x="1.500" y="1.500" width="8" height="7" fill="none" stroke="#ddd"/><path d="M0 0v4" stroke="#fff"/>'))}
                ${cell(16, svg(9, 9, '<path d="M0 3h2l3-3v9L2 6H0z" fill="#ddd"/><path d="M6.500 2.500c1.500 1 1.500 3 0 4" fill="none" stroke="#ccc"/>'))}
                <span style="width:36px;box-sizing:border-box;padding-left:8px;flex:none">15:20</span>
                <span style="width:9px;height:19px;background:#2f3a47;border-left:1px solid #5b6673;box-sizing:border-box;flex:none"></span>
            </div>`;
    }
}

class WpsWatermark extends HTMLElement {
    constructor() {
        super();
        this.attachShadow({mode: 'open'});
    }
    connectedCallback() {
        this.shadowRoot.innerHTML = `
            <style>
                :host { position: absolute; left: 769px; top: 457px; width: 180px; color: rgba(255,255,255,.82); pointer-events: none; display: flex; flex-direction: column; }
                .logo { display: flex; align-items: flex-end; height: 52px; }
                .bai { font: 700 32px/34px "Liberation Sans", sans-serif; letter-spacing: 1.500px; width: 58px; flex: none; margin-bottom: -1px; }
                .paw { position: relative; width: 54px; height: 52px; flex: none; }
                .paw svg { display: block; }
                .du { position: absolute; left: 11px; top: 31px; width: 32px; text-align: center; font: 700 16px/18px "Liberation Sans", sans-serif; color: #b4b8c3; }
                .jy { font: 400 28px/32px "Noto Sans CJK SC", sans-serif; letter-spacing: 2px; margin-left: 2px; white-space: nowrap; width: 60px; }
                .url { font: 400 20.500px/24px "Liberation Sans", sans-serif; letter-spacing: .65px; margin-top: 7px; white-space: nowrap; color: rgba(255,255,255,.68); }
            </style>
            <div class="logo">
                <span class="bai">Bai</span>
                <span class="paw">
                    ${svg(54, 52, '<g fill="rgba(255,255,255,.85)"><ellipse cx="19" cy="9" rx="6.500" ry="8.500"/><ellipse cx="36" cy="9" rx="6.500" ry="8.500"/><ellipse cx="7" cy="22" rx="6.500" ry="8.500"/><ellipse cx="47" cy="22" rx="6.500" ry="8.500"/><path d="M27 19c8 0 11 7 17 12 7 7 2 17-7 16-4 0-7-1-10-1s-6 1-10 1c-9 1-14-9-7-16 6-5 9-12 17-12z"/></g>')}
                    <span class="du">du</span>
                </span>
                <span class="jy">经验</span>
            </div>
            <div class="url">jingyan.baidu.com</div>`;
    }
}

customElements.define('wps-app', WpsApp);
customElements.define('wps-titlebar', WpsTitlebar);
customElements.define('wps-ribbon', WpsRibbon);
customElements.define('wps-quickbar', WpsQuickbar);
customElements.define('wps-workspace', WpsWorkspace);
customElements.define('wps-document', WpsDocument);
customElements.define('wps-scrollbar', WpsScrollbar);
customElements.define('wps-sidebar', WpsSidebar);
customElements.define('wps-side-item', WpsSideItem);
customElements.define('wps-statusbar', WpsStatusbar);
customElements.define('wps-taskbar', WpsTaskbar);
customElements.define('wps-watermark', WpsWatermark);
</script>
</body>
</html>
